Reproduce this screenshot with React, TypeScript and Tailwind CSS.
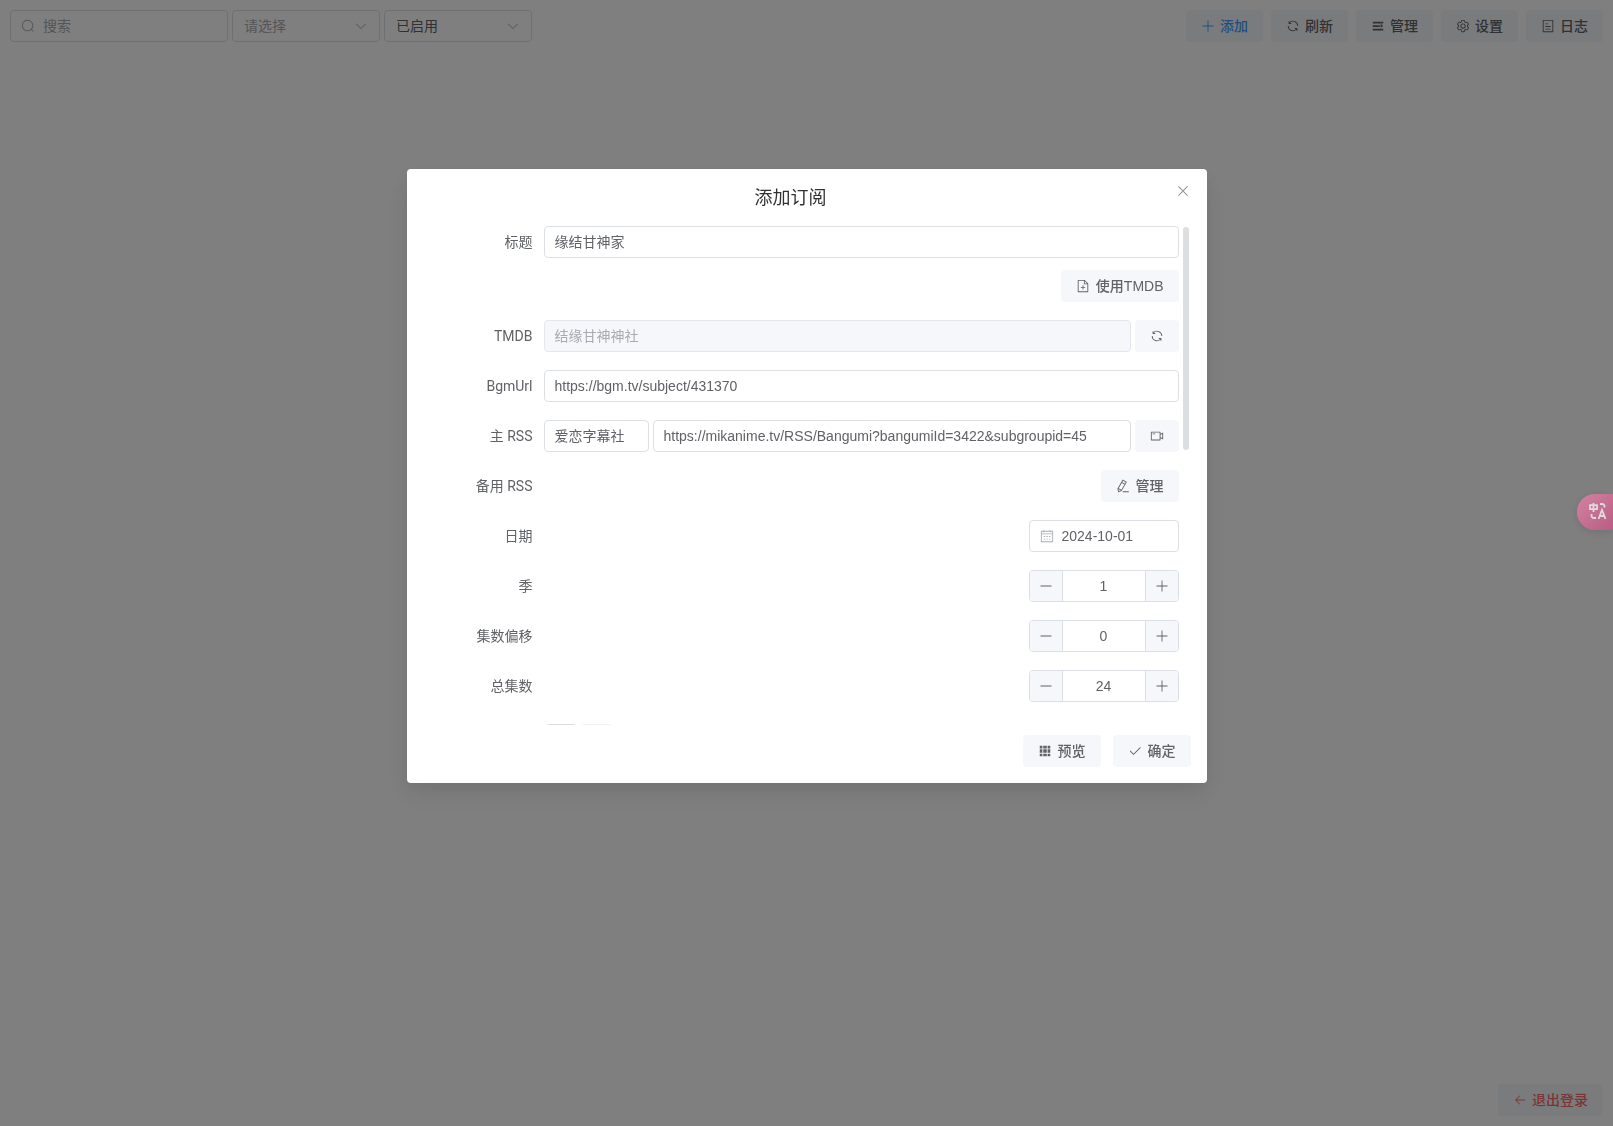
import type { ReactNode } from "react";

const ICONS = {
  search:
    "M795.904 750.72l124.992 124.928a32 32 0 0 1-45.248 45.248L750.656 795.904a416 416 0 1 1 45.248-45.248zM480 832a352 352 0 1 0 0-704 352 352 0 0 0 0 704",
  arrowDown:
    "M831.872 340.864 512 652.672 192.128 340.864a30.592 30.592 0 0 0-42.752 0 29.12 29.12 0 0 0 0 41.6L489.664 714.24a32 32 0 0 0 44.672 0l340.288-331.712a29.12 29.12 0 0 0 0-41.728 30.592 30.592 0 0 0-42.752 0z",
  plus: "M480 480V128a32 32 0 0 1 64 0v352h352a32 32 0 1 1 0 64H544v352a32 32 0 1 1-64 0V544H128a32 32 0 0 1 0-64z",
  minus: "M128 544h768a32 32 0 1 0 0-64H128a32 32 0 0 0 0 64",
  refresh:
    "M771.776 794.88A384 384 0 0 1 128 512h64a320 320 0 0 0 555.712 216.448H654.72a32 32 0 1 1 0-64h149.056a32 32 0 0 1 32 32v148.928a32 32 0 1 1-64 0v-50.56zM276.288 295.616h92.992a32 32 0 0 1 0 64H220.16a32 32 0 0 1-32-32V178.56a32 32 0 0 1 64 0v50.56A384 384 0 0 1 896.128 512h-64a320 320 0 0 0-555.776-216.384z",
  expand: "M128 192h768v128H128zm0 256h512v128H128zm0 256h768v128H128zm576-352 192 160-192 128z",
  setting:
    "M600.704 64a32 32 0 0 1 30.464 22.208l35.2 109.376c14.784 7.232 28.928 15.36 42.432 24.512l112.384-24.192a32 32 0 0 1 34.432 15.36L944.32 364.8a32 32 0 0 1-4.032 37.504l-77.12 85.12a357.12 357.12 0 0 1 0 49.024l77.12 85.248a32 32 0 0 1 4.032 37.504l-88.704 153.6a32 32 0 0 1-34.432 15.296L708.8 803.904c-13.44 9.088-27.648 17.28-42.368 24.512l-35.264 109.376A32 32 0 0 1 600.704 960H423.296a32 32 0 0 1-30.464-22.208L357.696 828.48a351.616 351.616 0 0 1-42.56-24.64l-112.32 24.256a32 32 0 0 1-34.432-15.36L79.68 659.2a32 32 0 0 1 4.032-37.504l77.12-85.248a357.12 357.12 0 0 1 0-48.896l-77.12-85.248A32 32 0 0 1 79.68 364.8l88.704-153.6a32 32 0 0 1 34.432-15.296l112.32 24.256c13.568-9.152 27.776-17.408 42.56-24.64l35.2-109.312A32 32 0 0 1 423.232 64H600.64zm-23.424 64H446.72l-36.352 113.088-24.512 11.968a294.113 294.113 0 0 0-34.816 20.096l-22.656 15.36-116.224-25.088-65.28 113.152 79.68 88.192-1.92 27.136a293.12 293.12 0 0 0 0 40.192l1.92 27.136-79.808 88.192 65.344 113.152 116.224-25.024 22.656 15.296a294.113 294.113 0 0 0 34.816 20.096l24.512 11.968L446.72 896h130.688l36.48-113.152 24.448-11.904a288.282 288.282 0 0 0 34.752-20.096l22.592-15.296 116.288 25.024 65.28-113.152-79.744-88.192 1.92-27.136a293.12 293.12 0 0 0 0-40.256l-1.92-27.136 79.808-88.128-65.344-113.152-116.288 24.96-22.592-15.232a287.616 287.616 0 0 0-34.752-20.096l-24.448-11.904L577.344 128zM512 320a192 192 0 1 1 0 384 192 192 0 0 1 0-384m0 64a128 128 0 1 0 0 256 128 128 0 0 0 0-256",
  tickets:
    "M192 128v768h640V128zm-32-64h704a32 32 0 0 1 32 32v832a32 32 0 0 1-32 32H160a32 32 0 0 1-32-32V96a32 32 0 0 1 32-32m160 448h384v64H320zm0-192h192v64H320zm0 384h384v64H320z",
  close:
    "M764.288 214.592 512 466.88 259.712 214.592a31.936 31.936 0 0 0-45.12 45.12L466.752 512 214.528 764.224a31.936 31.936 0 1 0 45.12 45.184L512 557.184l252.288 252.288a31.936 31.936 0 0 0 45.12-45.12L557.12 512.064l252.288-252.352a31.936 31.936 0 1 0-45.12-45.184z",
  documentAdd:
    "M832 384H576V128H192v768h640zm-26.496-64L640 154.496V320zM160 64h480l256 256v608a32 32 0 0 1-32 32H160a32 32 0 0 1-32-32V96a32 32 0 0 1 32-32m320 512V448h64v128h128v64H544v128h-64V640H352v-64z",
  videoCamera:
    "M704 768V256H128v512zm64-416 192-96v512l-192-96v128a32 32 0 0 1-32 32H96a32 32 0 0 1-32-32V224a32 32 0 0 1 32-32h640a32 32 0 0 1 32 32zm0 71.552v176.896l128 64V359.552zM192 320h192v64H192z",
  editPen:
    "m199.04 672.64 193.984 112 224-387.968-193.92-112-224 388.032zm-23.872 60.16 32.896 148.288 144.896-45.696zM455.04 229.248l193.92 112 56.704-98.112-193.984-112zM104.32 708.8l384-665.024 304.768 175.936L409.152 884.8h.064l-248.448 78.336zm384 254.272v-64h448v64z",
  calendar:
    "M128 384v512h768V192H768v32a32 32 0 1 1-64 0v-32H320v32a32 32 0 0 1-64 0v-32H128v128h768v64zm192-256h384V96a32 32 0 1 1 64 0v32h160a32 32 0 0 1 32 32v768a32 32 0 0 1-32 32H96a32 32 0 0 1-32-32V160a32 32 0 0 1 32-32h160V96a32 32 0 0 1 64 0zm-32 384h64a32 32 0 0 1 0 64h-64a32 32 0 0 1 0-64m0 192h64a32 32 0 1 1 0 64h-64a32 32 0 1 1 0-64m192-192h64a32 32 0 0 1 0 64h-64a32 32 0 0 1 0-64m0 192h64a32 32 0 1 1 0 64h-64a32 32 0 1 1 0-64m192-192h64a32 32 0 1 1 0 64h-64a32 32 0 1 1 0-64m0 192h64a32 32 0 1 1 0 64h-64a32 32 0 1 1 0-64",
  grid: "M640 384v256H384V384zm64 0h192v256H704zm-64 512H384V704h256zm64 0V704h192v192zm-64-768v192H384V128zm64 0h192v192H704zM320 384v256H128V384zm0 512H128V704h192zm0-768v192H128V128z",
  check:
    "M406.656 706.944 195.84 496.256a32 32 0 1 0-45.248 45.248l256 256 512-512a32 32 0 0 0-45.248-45.248L406.592 706.944z",
  back: "M224 480h640a32 32 0 1 1 0 64H224a32 32 0 0 1 0-64m13.248 32 265.408 265.344a32 32 0 0 1-45.312 45.312l-288-288a32 32 0 0 1 0-45.312l288-288a32 32 0 1 1 45.312 45.312z",
};

type IconName = keyof typeof ICONS;

function Icon({ name, className = "size-3.5" }: { name: IconName; className?: string }) {
  return (
    <svg viewBox="0 0 1024 1024" fill="currentColor" className={`shrink-0 ${className}`} aria-hidden>
      <path d={ICONS[name]} />
    </svg>
  );
}

function Button({
  icon,
  children,
  label,
  className = "gap-1.5 text-[#606266]",
}: {
  icon: IconName;
  children?: ReactNode;
  label?: string;
  className?: string;
}) {
  return (
    <button
      type="button"
      aria-label={label}
      className={`flex h-8 shrink-0 items-center justify-center rounded bg-[#f5f7fa] px-[15px] text-sm font-medium whitespace-nowrap ${className}`}
    >
      <Icon name={icon} />
      {children && <span>{children}</span>}
    </button>
  );
}

const FIELD = "h-8 rounded border border-[#dcdfe6] bg-white px-2.5 text-sm text-[#606266] outline-none";

function Row({ label, htmlFor, children }: { label: string; htmlFor?: string; children: ReactNode }) {
  return (
    <div className="flex">
      <label
        htmlFor={htmlFor}
        className="h-8 w-[121px] shrink-0 pr-[11px] text-right font-[Roboto,'Noto_Sans_CJK_SC',sans-serif] text-sm leading-8 text-[#606266]"
      >
        {label}
      </label>
      <div className="flex min-w-0 flex-1 justify-end gap-1">{children}</div>
    </div>
  );
}

function NumberField({ id, value }: { id: string; value: number }) {
  return (
    <div className="flex h-8 w-[150px] overflow-hidden rounded border border-[#dcdfe6] text-[#606266]">
      <button
        type="button"
        aria-label="减少"
        className="flex w-[33px] shrink-0 items-center justify-center border-r border-[#dcdfe6] bg-[#f5f7fa]"
      >
        <Icon name="minus" />
      </button>
      <input id={id} defaultValue={value} className="min-w-0 flex-1 text-center text-sm outline-none" />
      <button
        type="button"
        aria-label="增加"
        className="flex w-[33px] shrink-0 items-center justify-center border-l border-[#dcdfe6] bg-[#f5f7fa]"
      >
        <Icon name="plus" />
      </button>
    </div>
  );
}

function FilterSelect({ label, options, className }: { label: string; options: string[]; className: string }) {
  return (
    <div className="relative w-[148px]">
      <select
        aria-label={label}
        className={`h-8 w-full appearance-none rounded border border-[#dcdfe6] bg-white px-[11px] pb-px text-sm outline-none ${className}`}
      >
        {options.map((option) => (
          <option key={option}>{option}</option>
        ))}
      </select>
      <Icon name="arrowDown" className="pointer-events-none absolute top-[9px] right-3 size-3.5 text-[#a8abb2]" />
    </div>
  );
}

function Toolbar() {
  const actions: { icon: IconName; text: string }[] = [
    { icon: "refresh", text: "刷新" },
    { icon: "expand", text: "管理" },
    { icon: "setting", text: "设置" },
    { icon: "tickets", text: "日志" },
  ];

  return (
    <header className="flex items-center justify-between p-2.5">
      <div className="flex gap-1">
        <div className="flex h-8 w-[218px] items-center gap-2 rounded border border-[#dcdfe6] bg-white px-2.5 text-[#a8abb2]">
          <Icon name="search" />
          <input
            aria-label="搜索"
            placeholder="搜索"
            className="min-w-0 flex-1 text-sm outline-none placeholder:text-[#a8abb2]"
          />
        </div>
        <FilterSelect label="类型" options={["请选择"]} className="text-[#a8abb2]" />
        <FilterSelect label="状态" options={["已启用", "未启用"]} className="text-[#606266]" />
      </div>
      <div className="flex gap-2">
        <Button icon="plus" className="gap-[5px] text-[#409eff]">
          添加
        </Button>
        {actions.map((action) => (
          <Button key={action.text} icon={action.icon} className="gap-[5px] text-[#606266]">
            {action.text}
          </Button>
        ))}
      </div>
    </header>
  );
}

function SubscribeDialog() {
  return (
    <div
      role="dialog"
      aria-labelledby="dialog-title"
      className="relative mx-auto mt-[15vh] w-[800px] max-w-full rounded bg-white p-4 shadow-[0_12px_32px_4px_rgba(0,0,0,0.04),0_8px_20px_rgba(0,0,0,0.08)]"
    >
      <h2 id="dialog-title" className="pr-8 pb-3.5 text-center text-lg leading-[26px] text-[#303133]">
        添加订阅
      </h2>
      <button
        type="button"
        aria-label="关闭"
        className="absolute top-0 right-0 flex h-11 w-12 items-center justify-center text-[#909399]"
      >
        <Icon name="close" className="size-4" />
      </button>

      <div className="relative">
        <div className="flex h-[500px] flex-col gap-[18px] overflow-hidden pt-px pr-3">
          <div className="flex flex-col gap-3">
            <Row label="标题" htmlFor="title">
              <input id="title" defaultValue="缘结甘神家" className={`${FIELD} min-w-0 flex-1 pb-0.5`} />
            </Row>
            <div className="flex justify-end">
              <Button icon="documentAdd">使用TMDB</Button>
            </div>
          </div>
          <Row label="TMDB" htmlFor="tmdb">
            <input
              id="tmdb"
              disabled
              defaultValue="结缘甘神神社"
              className="h-8 min-w-0 flex-1 rounded border border-[#e4e7ed] bg-[#f5f7fa] px-2.5 pb-0.5 text-sm text-[#a8abb2]"
            />
            <Button icon="refresh" label="刷新 TMDB" />
          </Row>
          <Row label="BgmUrl" htmlFor="bgm-url">
            <input
              id="bgm-url"
              defaultValue="https://bgm.tv/subject/431370"
              className={`${FIELD} min-w-0 flex-1`}
            />
          </Row>
          <Row label="主 RSS" htmlFor="rss-url">
            <input aria-label="字幕组" defaultValue="爱恋字幕社" className={`${FIELD} w-[105px] pb-0.5`} />
            <input
              id="rss-url"
              defaultValue="https://mikanime.tv/RSS/Bangumi?bangumiId=3422&subgroupid=45"
              className={`${FIELD} min-w-0 flex-1`}
            />
            <Button icon="videoCamera" label="播放列表" />
          </Row>
          <Row label="备用 RSS">
            <Button icon="editPen">管理</Button>
          </Row>
          <Row label="日期" htmlFor="date">
            <div className="flex h-8 w-[150px] items-center gap-2 rounded border border-[#dcdfe6] px-2.5 text-[#a8abb2]">
              <Icon name="calendar" />
              <input
                id="date"
                defaultValue="2024-10-01"
                className="min-w-0 flex-1 text-sm text-[#606266] outline-none"
              />
            </div>
          </Row>
          <Row label="季" htmlFor="season">
            <NumberField id="season" value={1} />
          </Row>
          <Row label="集数偏移" htmlFor="offset">
            <NumberField id="offset" value={0} />
          </Row>
          <Row label="总集数" htmlFor="total">
            <NumberField id="total" value={24} />
          </Row>
          {/* tag row, mostly below the fold */}
          <div className="flex h-8 shrink-0 items-center gap-1 pl-[122px]">
            <span className="h-6 w-8 rounded border border-[#dcdcdc]" />
            <span className="h-6 w-8 rounded bg-[#f0f0f8]" />
          </div>
        </div>
        <div className="absolute top-0.5 right-0.5 h-[223px] w-1.5 rounded-full bg-[#dddee0]" />
      </div>

      <div className="flex justify-end gap-3 pt-2.5">
        <Button icon="grid">预览</Button>
        <Button icon="check">确定</Button>
      </div>
    </div>
  );
}

function TranslateTab() {
  return (
    <button
      type="button"
      aria-label="翻译"
      className="fixed top-[494px] right-0 flex h-9 w-9 items-center justify-end rounded-l-full bg-linear-to-br from-[#d283a2] to-[#b95d84] pr-1.5 pb-0.5 shadow-[0_2px_8px_rgba(0,0,0,0.12)]"
    >
      <svg viewBox="0 0 18 18" fill="none" stroke="#dcdcdc" strokeWidth="1.8" className="size-[18px]" aria-hidden>
        <path d="M1 3.2h7v4H1zM4.5 1v9" />
        <path d="M11 2h2.200a2.300 2.300 0 0 1 2.300 2.300V5.500M2.500 12v1.700A2.300 2.300 0 0 0 4.800 16H7" />
        <path d="M9.500 17l3.500-9 3.500 9M10.700 14h4.600" />
      </svg>
    </button>
  );
}

export default function App() {
  return (
    <div className="flex min-h-screen flex-col justify-between bg-white font-['Liberation_Sans','Noto_Sans_CJK_SC',sans-serif]">
      <Toolbar />
      <footer className="flex justify-end p-2.5">
        <Button icon="back" className="gap-[5px] text-[#f56c6c]">
          退出登录
        </Button>
      </footer>
      <div className="fixed inset-0 overflow-hidden bg-black/50">
        <SubscribeDialog />
      </div>
      <TranslateTab />
    </div>
  );
}
